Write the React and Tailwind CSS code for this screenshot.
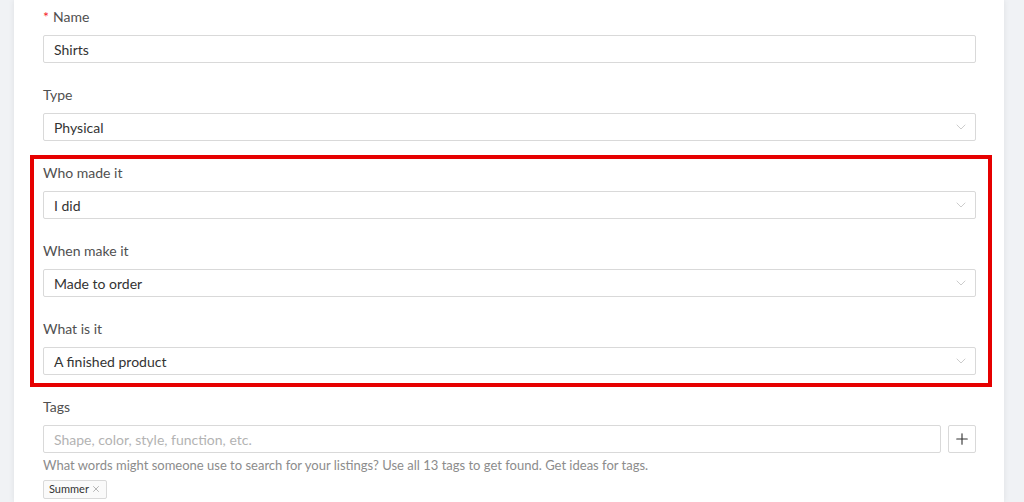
import { ChevronDown, Plus, X } from "lucide-react";

function Label({ children, required }) {
  return (
    <div className="h-[22px] leading-[22px] text-[14px] text-[#505050] flex items-center">
      {required && <span className="text-[#f5222d] mr-1 text-[14px]">*</span>}
      {children}
    </div>
  );
}

function TextInput({ value, placeholder, className = "" }) {
  return (
    <div
      className={`h-[28px] border border-[#d9d9d9] rounded-[2px] bg-white flex items-center px-[10px] text-[14px] ${className}`}
    >
      {value ? (
        <span className="text-[#333]">{value}</span>
      ) : (
        <span className="text-[#b3b3b3]">{placeholder}</span>
      )}
    </div>
  );
}

function Select({ value }) {
  return (
    <div className="h-[28px] border border-[#d9d9d9] rounded-[2px] bg-white flex items-center justify-between pl-[10px] pr-[6px] text-[14px] text-[#333]">
      <span>{value}</span>
      <ChevronDown size={16} strokeWidth={1.2} className="text-[#bfbfbf]" />
    </div>
  );
}

function Field({ label, required, children }) {
  return (
    <div className="flex flex-col gap-[7px] mb-[21px]">
      <Label required={required}>{label}</Label>
      {children}
    </div>
  );
}

export default function App() {
  return (
    <div
      className="w-[1024px] h-[502px] bg-[#f0f2f5] flex overflow-hidden"
      style={{ fontFamily: "Lato, 'Noto Sans', sans-serif" }}
    >
      <div className="ml-[14px] w-[990px] bg-white shadow-[0_0_6px_rgba(0,0,0,0.08)] relative pl-[29px] pr-[28px] pt-[6px]">
        <Field label="Name" required>
          <TextInput value="Shirts" />
        </Field>
        <Field label="Type">
          <Select value="Physical" />
        </Field>
        <Field label="Who made it">
          <Select value="I did" />
        </Field>
        <Field label="When make it">
          <Select value="Made to order" />
        </Field>
        <Field label="What is it">
          <Select value="A finished product" />
        </Field>
        <div className="flex flex-col gap-[7px]">
          <Label>Tags</Label>
          <div className="flex gap-[7px]">
            <TextInput placeholder="Shape, color, style, function, etc." className="flex-1" />
            <button className="w-[28px] h-[28px] border border-[#d9d9d9] rounded-[2px] bg-white flex items-center justify-center text-[#333]">
              <Plus size={18} strokeWidth={1.5} />
            </button>
          </div>
        </div>
        <div className="mt-[2px] text-[13px] leading-[20px] text-[#8c8c8c]">
          What words might someone use to search for your listings? Use all 13 tags to get found. Get ideas for tags.
        </div>
        <div className="mt-[3px] inline-flex items-center h-[19px] px-[5px] border border-[#d9d9d9] rounded-[2px] bg-[#fafafa] text-[11px] text-[#333]">
          Summer
          <X size={10} strokeWidth={1.5} className="ml-[2px] text-[#8c8c8c]" />
        </div>

        <div className="absolute left-[16px] top-[155px] w-[962px] h-[232px] border-[4px] border-[#e60000]" />
      </div>
    </div>
  );
}
